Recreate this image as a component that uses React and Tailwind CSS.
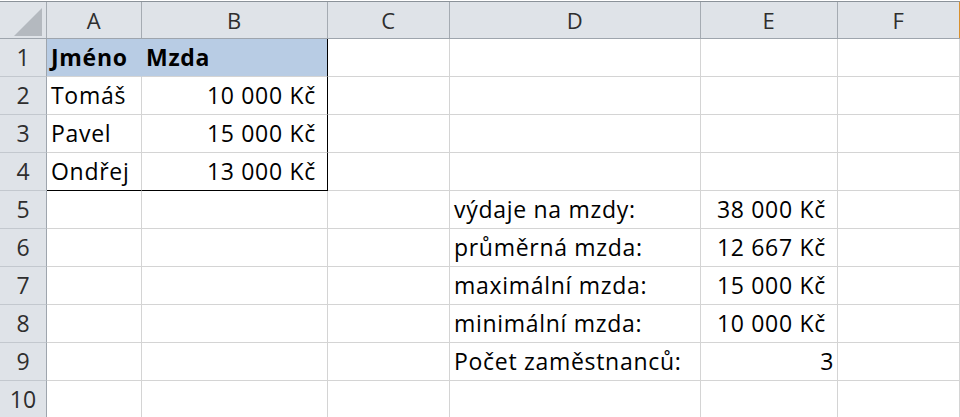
const cols = [
  { name: 'A', w: 'w-[95px]' },
  { name: 'B', w: 'w-[186px]' },
  { name: 'C', w: 'w-[122px]' },
  { name: 'D', w: 'w-[251px]' },
  { name: 'E', w: 'w-[137px]' },
  { name: 'F', w: 'w-[122px]' },
]

// one entry per row, cells keyed by column letter
const rows = [
  { A: { t: 'Jméno', bold: true }, B: { t: 'Mzda', bold: true } },
  { A: { t: 'Tomáš' }, B: { t: '10 000 Kč', money: true } },
  { A: { t: 'Pavel' }, B: { t: '15 000 Kč', money: true } },
  { A: { t: 'Ondřej' }, B: { t: '13 000 Kč', money: true } },
  { D: { t: 'výdaje na mzdy:' }, E: { t: '38 000 Kč', money: true } },
  { D: { t: 'průměrná mzda:' }, E: { t: '12 667 Kč', money: true } },
  { D: { t: 'maximální mzda:' }, E: { t: '15 000 Kč', money: true } },
  { D: { t: 'minimální mzda:' }, E: { t: '10 000 Kč', money: true } },
  { D: { t: 'Počet zaměstnanců:' }, E: { t: '3', num: true } },
  {},
]

function cellClass(r, c) {
  let cls = 'flex items-center border-r border-b border-[#d4d4d4] whitespace-nowrap'
  if (r === 0 && (c === 'A' || c === 'B')) cls += ' bg-[#b8cce4]'
  if (r === 0 && c === 'A') cls += ' !border-r-[#b8cce4]'
  if (r <= 3 && c === 'B') cls += ' !border-r-black'
  if (r === 3 && (c === 'A' || c === 'B')) cls += ' !border-b-black'
  return cls
}

export default function App() {
  return (
    <div className="w-[960px] h-[417px] overflow-hidden bg-white pt-px text-black font-['Open_Sans',sans-serif] text-[23px] tracking-[0.7px]">
      <div className="flex h-[38px] border-t border-b border-t-[#8b9299] border-b-[#9ea5ad] bg-[#dfe3e8] text-[#2e2e2e] text-[22px]">
        <div className="w-[47px] border-r border-[#a5abb2] relative">
          <svg className="absolute left-0 top-0" width="46" height="36">
            <polygon points="42,6 42,34 14,34" fill="#b4b9bf" />
          </svg>
        </div>
        {cols.map((c, i) => (
          <div
            key={c.name}
            className={`${c.w} flex items-center justify-center border-r ${i === 5 ? 'border-[#d8902e]' : 'border-[#a5abb2]'}`}
          >
            {c.name}
          </div>
        ))}
      </div>
      {rows.map((row, r) => (
        <div key={r} className="flex h-[38px]">
          <div className="w-[47px] flex items-center justify-center bg-[#dfe3e8] border-r border-b border-r-[#9ea5ad] border-b-[#c3c8ce] text-[#2e2e2e] tracking-normal">
            {r + 1}
          </div>
          {cols.map((c) => {
            const cell = row[c.name]
            let inner = null
            if (cell) {
              const align = cell.money ? 'justify-end pr-[11px]' : cell.num ? 'justify-end pr-[3px]' : 'pl-[4px]'
              inner = (
                <span className={`${align} flex-1 flex ${cell.bold ? 'font-bold' : ''}`}>{cell.t}</span>
              )
            }
            return (
              <div key={c.name} className={`${c.w} ${cellClass(r, c.name)}`}>
                {inner}
              </div>
            )
          })}
        </div>
      ))}
    </div>
  )
}
